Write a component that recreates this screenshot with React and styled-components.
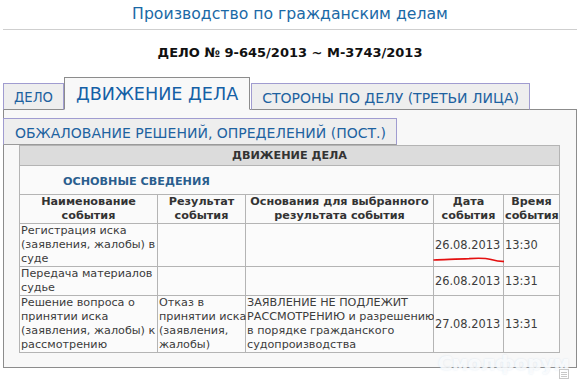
import React from "react";
import styled, { createGlobalStyle } from "styled-components";

const GlobalStyle = createGlobalStyle`
  html, body { margin: 0; padding: 0; background: #ffffff; }
  body { font-family: "DejaVu Sans", Verdana, sans-serif; }
`;

const Page = styled.div`
  position: relative;
  width: 584px;
  height: 380px;
  overflow: hidden;
  box-sizing: border-box;
  padding: 0 7px 0 3px;
`;

const Title = styled.h1`
  margin: 0;
  height: 29px;
  line-height: 27px;
  font-size: 15.7px;
  font-weight: normal;
  color: #1a69a6;
  text-align: center;
  border-bottom: 1px solid #cfcfcf;
`;

const CaseNo = styled.h2`
  margin: 13px 0 0;
  line-height: 20px;
  font-size: 13px;
  font-weight: bold;
  color: #111;
  text-align: center;
`;

const TabRow = styled.div`
  display: flex;
  align-items: flex-end;
  margin-top: 14px;
  margin-bottom: -1px;
  position: relative;
  z-index: 1;
`;

const Tab = styled.div`
  box-sizing: border-box;
  height: ${(p) => (p.$active ? "33px" : "27px")};
  padding: ${(p) => (p.$active ? "0 11px 0 11px" : "2px 10px 0")};
  margin-left: ${(p) => (p.$gap ? "1px" : "0")};
  display: flex;
  align-items: center;
  font-size: ${(p) => (p.$active ? "17.6px" : p.$small ? "13.2px" : "14px")};
  color: ${(p) => (p.$active ? "#1460a6" : "#1d62a0")};
  background: ${(p) => (p.$active ? "#f8f8f8" : "#eeeeee")};
  border: 1px solid ${(p) => (p.$active ? "#8c8c8c" : "#a09cd0")};
  border-bottom: 1px solid ${(p) => (p.$active ? "#f8f8f8" : "#8c8c8c")};
  white-space: nowrap;
`;

const Panel = styled.div`
  border: 1px solid #8c8c8c;
  background: #f8f8f8;
  padding: 8px 0 14px 0;
`;

const SubTab = styled.div`
  display: inline-flex;
  align-items: center;
  box-sizing: border-box;
  height: 27px;
  margin-left: -1px;
  padding: 2px 10px 0 11px;
  font-size: 14px;
  color: #1d62a0;
  background: #eeeeee;
  border: 1px solid #a09cd0;
  border-bottom: 1px solid #9a9a9a;
  white-space: nowrap;
`;

const TableWrap = styled.div`
  padding-left: 15px;
`;

const Table = styled.table`
  width: 540px;
  table-layout: fixed;
  border-collapse: collapse;
  font-size: 11.2px;
  line-height: 14px;
  color: #3c3c3c;
`;

const Caption = styled.th`
  height: 19px;
  padding: 0;
  background: #dcdcdc;
  border: 1px solid #b4b4b4;
  font-weight: bold;
  color: #333;
  text-align: center;
`;

const Section = styled.th`
  height: 24px;
  padding: 4px 0 0 43px;
  border: 1px solid #b4b4b4;
  text-align: left;
  font-weight: bold;
  color: #2a5e8e;
  background: #fafafa;
`;

const HeadCell = styled.th`
  padding: 0 1px;
  border: 1px solid #b4b4b4;
  font-weight: bold;
  color: #333;
  text-align: center;
  vertical-align: middle;
  background: #fafafa;
  white-space: nowrap;
`;

const Cell = styled.td`
  position: relative;
  padding: 0 1px;
  border: 1px solid #b4b4b4;
  vertical-align: middle;
  background: #fbfbfb;
  white-space: nowrap;
  overflow: visible;
  font-size: ${(p) => (p.$big ? "11.4px" : "11.2px")};
`;

const Scribble = styled.svg`
  position: absolute;
  left: -1px;
  top: 32px;
  width: 76px;
  height: 9px;
  pointer-events: none;
`;

const Watermark = styled.div`
  position: absolute;
  left: 438px;
  top: 351px;
  font-size: 20px;
  font-weight: bold;
  letter-spacing: -0.6px;
  color: rgba(255, 255, 255, 0.8);
  text-shadow: 0 0 2px rgba(180, 205, 228, 0.45);
  white-space: nowrap;
  pointer-events: none;
`;

const CornerIcon = styled.svg`
  position: absolute;
  left: 559px;
  top: 369px;
  width: 10px;
  height: 10px;
`;

const cols = [138, 88, 188, 70, 56];

const rows = [
  {
    name: ["Регистрация иска", "(заявления, жалобы) в", "суде"],
    result: [],
    basis: [],
    date: "26.08.2013",
    time: "13:30",
    mark: true,
  },
  {
    name: ["Передача материалов", "судье"],
    result: [],
    basis: [],
    date: "26.08.2013",
    time: "13:31",
  },
  {
    name: ["Решение вопроса о", "принятии иска", "(заявления, жалобы) к", "рассмотрению"],
    result: ["Отказ в", "принятии иска", "(заявления,", "жалобы)"],
    basis: [
      "ЗАЯВЛЕНИЕ НЕ ПОДЛЕЖИТ",
      "РАССМОТРЕНИЮ и разрешению",
      "в порядке гражданского",
      "судопроизводства",
    ],
    date: "27.08.2013",
    time: "13:31",
  },
];

const Lines = ({ items }) =>
  items.map((t, i) => (
    <React.Fragment key={i}>
      {i > 0 && <br />}
      {t}
    </React.Fragment>
  ));

export default function App() {
  return (
    <>
      <GlobalStyle />
      <Page>
        <Title>Производство по гражданским делам</Title>
        <CaseNo>ДЕЛО № 9-645/2013 ~ М-3743/2013</CaseNo>
        <TabRow>
          <Tab $small>ДЕЛО</Tab>
          <Tab $active>ДВИЖЕНИЕ ДЕЛА</Tab>
          <Tab $gap>СТОРОНЫ ПО ДЕЛУ (ТРЕТЬИ ЛИЦА)</Tab>
        </TabRow>
        <Panel>
          <SubTab>ОБЖАЛОВАНИЕ РЕШЕНИЙ, ОПРЕДЕЛЕНИЙ (ПОСТ.)</SubTab>
          <TableWrap>
            <Table>
              <colgroup>
                {cols.map((w, i) => (
                  <col key={i} style={{ width: w }} />
                ))}
              </colgroup>
              <thead>
                <tr>
                  <Caption colSpan={5}>ДВИЖЕНИЕ ДЕЛА</Caption>
                </tr>
                <tr>
                  <Section colSpan={5}>ОСНОВНЫЕ СВЕДЕНИЯ</Section>
                </tr>
                <tr>
                  <HeadCell>
                    <Lines items={["Наименование", "события"]} />
                  </HeadCell>
                  <HeadCell>
                    <Lines items={["Результат", "события"]} />
                  </HeadCell>
                  <HeadCell>
                    <Lines items={["Основания для выбранного", "результата события"]} />
                  </HeadCell>
                  <HeadCell>
                    <Lines items={["Дата", "события"]} />
                  </HeadCell>
                  <HeadCell>
                    <Lines items={["Время", "события"]} />
                  </HeadCell>
                </tr>
              </thead>
              <tbody>
                {rows.map((r, i) => (
                  <tr key={i}>
                    <Cell>
                      <Lines items={r.name} />
                    </Cell>
                    <Cell>
                      <Lines items={r.result} />
                    </Cell>
                    <Cell>
                      <Lines items={r.basis} />
                    </Cell>
                    <Cell $big>
                      {r.date}
                      {r.mark && (
                        <Scribble viewBox="0 0 76 9">
                          <path
                            d="M1 4 C 12 3.5, 24 3.2, 36 2.6 C 46 1.8, 52 1.8, 58 3.6 C 64 5.6, 70 5.8, 75 5.6"
                            fill="none"
                            stroke="#e41010"
                            strokeWidth="1.6"
                            strokeLinecap="round"
                          />
                        </Scribble>
                      )}
                    </Cell>
                    <Cell $big>{r.time}</Cell>
                  </tr>
                ))}
              </tbody>
            </Table>
          </TableWrap>
        </Panel>
        <Watermark>Смолфорум</Watermark>
        <CornerIcon viewBox="0 0 10 10">
          <rect x="0.5" y="0.5" width="9" height="9" fill="none" stroke="#c8c8c8" />
          <path d="M2 3.5h6M2 5.5h6M2 7.5h6" stroke="#c8c8c8" />
        </CornerIcon>
      </Page>
    </>
  );
}
